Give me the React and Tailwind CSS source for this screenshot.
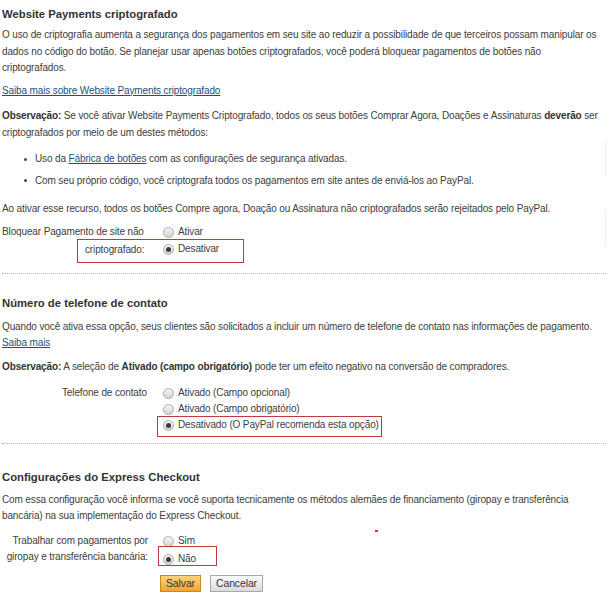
import React from "react";

const font = { fontFamily: '"Liberation Sans", Arial, sans-serif' };

function Radio({ checked }) {
  return (
    <span className="inline-flex h-[11px] w-[11px] shrink-0 items-center justify-center rounded-full border border-[#acacac] bg-gradient-to-b from-[#f6f6f6] to-[#d4d4d4]">
      {checked && <span className="h-[5px] w-[5px] rounded-full bg-[#3a3a3a]" />}
    </span>
  );
}

function Option({ checked, children }) {
  return (
    <div className="flex h-[16px] items-center gap-[4px]">
      <Radio checked={checked} />
      <span>{children}</span>
    </div>
  );
}

function Dotted() {
  return <div className="mr-[5px] border-b border-dotted border-[#b5b5b5]" />;
}

export default function App() {
  return (
    <div
      className="relative h-[599px] w-[611px] overflow-hidden bg-white pl-[2px] text-[10px] leading-[16.5px] tracking-[-0.13px] text-[#404040]"
      style={font}
    >
      {/* Section 1 */}
      <h3 className="pt-[6px] text-[11.3px] font-bold leading-[16px] tracking-normal text-[#333]">
        Website Payments criptografado
      </h3>
      <p className="mt-[5px]">
        O uso de criptografia aumenta a segurança dos pagamentos em seu site ao reduzir a possibilidade de que terceiros possam manipular os dados no código do botão. Se planejar usar apenas botões criptografados, você poderá bloquear pagamentos de botões não
        <br />
        criptografados.
      </p>
      <p className="mt-[6px]">
        <a className="text-[#274f7c] underline">Saiba mais sobre Website Payments criptografado</a>
      </p>
      <p className="mt-[9px]">
        <b className="text-[#333]">Observação:</b> Se você ativar Website Payments Criptografado, todos os seus botões Comprar Agora, Doações e Assinaturas <b className="text-[#333]">deverão</b> ser criptografados por meio de um destes métodos:
      </p>
      <ul className="mt-[10px] pl-[22px]">
        <li className="flex items-center gap-[8px]">
          <span className="h-[3px] w-[3px] rounded-full bg-[#444]" />
          <span>
            Uso da <a className="text-[#274f7c] underline">Fábrica de botões</a> com as configurações de segurança ativadas.
          </span>
        </li>
        <li className="mt-[5px] flex items-center gap-[8px]">
          <span className="h-[3px] w-[3px] rounded-full bg-[#444]" />
          <span>Com seu próprio código, você criptografa todos os pagamentos em site antes de enviá-los ao PayPal.</span>
        </li>
      </ul>
      <p className="mt-[12px]">
        Ao ativar esse recurso, todos os botões Compre agora, Doação ou Assinatura não criptografados serão rejeitados pelo PayPal.
      </p>
      <div className="relative mt-[6px] flex">
        <div className="w-[161px] shrink-0">
          <div className="leading-[16px]">Bloquear Pagamento de site não</div>
          <div className="pl-[83px] leading-[19px]">criptografado:</div>
        </div>
        <div className="pt-[1px]">
          <Option>Ativar</Option>
          <div className="mt-[1px]">
            <Option checked>Desativar</Option>
          </div>
        </div>
        <div className="absolute left-[75px] top-[15px] h-[24px] w-[167px] border border-[#c0393b]" />
      </div>
      <div className="mt-[14px]">
        <Dotted />
      </div>

      {/* Section 2 */}
      <h3 className="mt-[21px] text-[11.3px] font-bold leading-[16px] tracking-normal text-[#333]">
        Número de telefone de contato
      </h3>
      <p className="mt-[8px] leading-[16px]">
        Quando você ativa essa opção, seus clientes são solicitados a incluir um número de telefone de contato nas informações de pagamento.
        <br />
        <a className="text-[#274f7c] underline">Saiba mais</a>
      </p>
      <p className="mt-[8px]">
        <b className="text-[#333]">Observação:</b> A seleção de <b className="text-[#333]">Ativado (campo obrigatório)</b> pode ter um efeito negativo na conversão de compradores.
      </p>
      <div className="relative mt-[10px] flex">
        <div className="w-[161px] shrink-0 pl-[60px] leading-[16px]">Telefone de contato</div>
        <div>
          <Option>Ativado (Campo opcional)</Option>
          <Option>Ativado (Campo obrigatório)</Option>
          <Option checked>Desativado (O PayPal recomenda esta opção)</Option>
        </div>
        <div className="absolute left-[155px] top-[31px] h-[21px] w-[225px] border border-[#c0393b]" />
      </div>
      <div className="mt-[10px]">
        <Dotted />
      </div>

      {/* Section 3 */}
      <h3 className="mt-[25px] text-[11.3px] font-bold leading-[16px] tracking-normal text-[#333]">
        Configurações do Express Checkout
      </h3>
      <p className="mt-[7px] leading-[16px]">
        Com essa configuração você informa se você suporta tecnicamente os métodos alemães de financiamento (giropay e transferência
        <br />
        bancária) na sua implementação do Express Checkout.
      </p>
      <div className="relative mt-[9px] flex">
        <div className="w-[161px] shrink-0">
          <div className="w-[146px] text-right leading-[16px]">Trabalhar com pagamentos por</div>
          <div className="w-[146px] text-right leading-[16px]">giropay e transferência bancária:</div>
        </div>
        <div>
          <Option>Sim</Option>
          <div className="mt-[2px]">
            <Option checked>Não</Option>
          </div>
        </div>
        <div className="absolute left-[156px] top-[13px] h-[20px] w-[59px] border border-[#c0393b]" />
      </div>
      <div className="mt-[8px] flex gap-[9px] pl-[158px]">
        <button className="h-[17px] border border-[#c98a1b] bg-gradient-to-b from-[#fcd37a] to-[#f0a52b] px-[5px] text-[10.5px] leading-[15px] text-[#333]">
          Salvar
        </button>
        <button className="h-[17px] border border-[#a8a8a8] bg-gradient-to-b from-[#fbfbfb] to-[#dcdcdc] px-[5px] text-[10.5px] leading-[15px] text-[#333]">
          Cancelar
        </button>
      </div>

      {/* small artifacts */}
      <div className="absolute left-[375px] top-[530px] h-[2px] w-[3px] bg-[#d33]" />
      <div className="absolute left-[605px] top-[140px] h-[36px] w-px bg-[#eee]" />
      <div className="absolute left-[605px] top-[210px] h-[36px] w-px bg-[#eee]" />
    </div>
  );
}
